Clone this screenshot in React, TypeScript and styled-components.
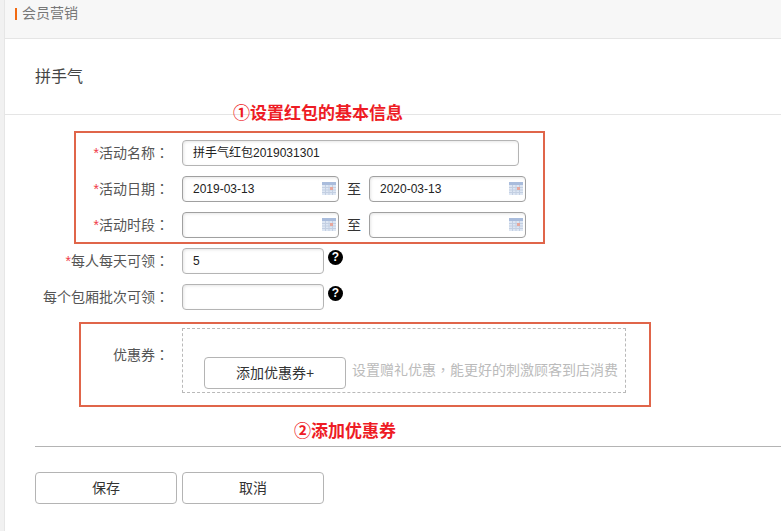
import React from "react";
import styled, { createGlobalStyle } from "styled-components";

const Global = createGlobalStyle`
  html, body { margin: 0; padding: 0; background: #fff; }
  body { font-family: "Liberation Sans", "Noto Sans CJK SC", sans-serif; font-size: 14px; color: #333; }
  * { box-sizing: border-box; }
`;

const Page = styled.div`
  position: relative;
  width: 781px;
  height: 531px;
  overflow: hidden;
  display: flex;
`;
const Strip = styled.div`
  width: 5px;
  flex: none;
  background: #f1f1f1;
  border-right: 1px solid #e6e6e6;
`;
const Main = styled.div`
  flex: 1;
  min-width: 0;
`;
const Crumb = styled.div`
  height: 39px;
  background: #f7f7f7;
  border-bottom: 1px solid #e5e5e5;
  padding: 6px 0 0 10px;
  display: flex;
  align-items: flex-start;
  gap: 5px;
  font-size: 14px;
  line-height: 15px;
  color: #777;
`;
const CrumbMark = styled.span`
  width: 2px;
  height: 12px;
  margin-top: 2px;
  background: #f26a12;
`;
const Heading = styled.div`
  height: 76px;
  border-bottom: 1px solid #e5e5e5;
  padding: 28px 0 0 30px;
  font-size: 16px;
  line-height: 20px;
  color: #444;
`;
const Form = styled.div`
  padding-top: 25px;
  display: flex;
  flex-direction: column;
  gap: 10px;
`;
const Row = styled.div`
  display: flex;
  align-items: flex-start;
`;
const Label = styled.div`
  width: 177px;
  height: 26px;
  flex: none;
  padding-right: 13px;
  text-align: right;
  line-height: 26px;
  color: #555;
  white-space: nowrap;
`;
const Colon = styled.span`
  font-family: "Noto Sans CJK TC", sans-serif;
  line-height: 1;
`;
const Star = styled.span`
  color: #f0394a;
`;
const InputBox = styled.div<{ $w: number }>`
  position: relative;
  width: ${(p) => p.$w}px;
  height: 26px;
  border: 1px solid #b4b4b4;
  border-radius: 4px;
  box-shadow: inset 1px 1px 3px rgba(0, 0, 0, 0.1);
  padding-left: 10px;
  font-size: 12px;
  line-height: 24px;
  color: #222;
  background: #fff;
`;
const DateBox = styled(InputBox)`
  border-color: #a0a0a0;
`;
const CalSlot = styled.span`
  position: absolute;
  right: 2px;
  top: 5px;
  display: flex;
`;
const To = styled.span`
  width: 30px;
  text-align: center;
  line-height: 26px;
  font-size: 14px;
  color: #333;
`;
const Help = styled.span`
  width: 15px;
  height: 15px;
  margin: 2px 0 0 4px;
  border-radius: 50%;
  background: #000;
  color: #fff;
  font-size: 12px;
  font-weight: 700;
  line-height: 15px;
  text-align: center;
`;
const CouponRow = styled(Row)`
  margin-top: 8px;
`;
const CouponLabel = styled(Label)`
  height: 37px;
  line-height: 20px;
  padding-top: 17px;
`;
const CouponBox = styled.div`
  width: 444px;
  height: 65px;
  border: 1px dashed #b9b9b9;
  padding: 28px 0 0 21px;
  display: flex;
  align-items: flex-start;
  gap: 6px;
`;
const Button = styled.div`
  width: 142px;
  height: 32px;
  border: 1px solid #b4b4b4;
  border-radius: 4px;
  background: #fff;
  text-align: center;
  line-height: 30px;
  font-size: 14px;
  color: #333;
`;
const Hint = styled.span`
  font-family: "Noto Sans CJK TC", sans-serif;
  font-size: 14px;
  line-height: 24px;
  color: #bbb;
  white-space: nowrap;
`;
const Rule = styled.div`
  height: 1px;
  margin: 53px 0 0 30px;
  background: #b4b4b4;
`;
const Actions = styled.div`
  display: flex;
  gap: 5px;
  padding: 25px 0 0 30px;
`;
const Callout = styled.div<{ $x: number; $y: number; $w: number; $h: number }>`
  position: absolute;
  left: ${(p) => p.$x}px;
  top: ${(p) => p.$y}px;
  width: ${(p) => p.$w}px;
  height: ${(p) => p.$h}px;
  border: 2px solid #e0654a;
  pointer-events: none;
`;
const Note = styled.div<{ $x: number; $y: number }>`
  position: absolute;
  left: ${(p) => p.$x}px;
  top: ${(p) => p.$y}px;
  font-size: 17px;
  font-weight: 700;
  line-height: 20px;
  color: #ee1c25;
  white-space: nowrap;
`;

const Calendar = () => (
  <svg width="14" height="13" viewBox="0 0 14 13">
    <rect width="14" height="13" fill="#dde6f3" />
    <rect width="14" height="3" fill="#a9bcdc" />
    <path d="M0 5.5h14M0 8h14M0 10.5h14M3.5 3v10M7 3v10M10.500 3v10" stroke="#c3cfe2" strokeWidth="1" fill="none" />
    <rect x="8" y="5" width="3" height="3" fill="#e6a79d" />
  </svg>
);

const DateField = ({ value }: { value?: string }) => (
  <DateBox $w={157}>
    {value}
    <CalSlot>
      <Calendar />
    </CalSlot>
  </DateBox>
);

export default function App() {
  return (
    <Page>
      <Global />
      <Strip />
      <Main>
        <Crumb>
          <CrumbMark />
          会员营销
        </Crumb>
        <Heading>拼手气</Heading>
        <Form>
          <Row>
            <Label><Star>*</Star>活动名称<Colon>：</Colon></Label>
            <InputBox $w={337}>拼手气红包2019031301</InputBox>
          </Row>
          <Row>
            <Label><Star>*</Star>活动日期<Colon>：</Colon></Label>
            <DateField value="2019-03-13" />
            <To>至</To>
            <DateField value="2020-03-13" />
          </Row>
          <Row>
            <Label><Star>*</Star>活动时段<Colon>：</Colon></Label>
            <DateField />
            <To>至</To>
            <DateField />
          </Row>
          <Row>
            <Label><Star>*</Star>每人每天可领<Colon>：</Colon></Label>
            <InputBox $w={142}>5</InputBox>
            <Help>?</Help>
          </Row>
          <Row>
            <Label>每个包厢批次可领<Colon>：</Colon></Label>
            <InputBox $w={142} />
            <Help>?</Help>
          </Row>
          <CouponRow>
            <CouponLabel>优惠券<Colon>：</Colon></CouponLabel>
            <CouponBox>
              <Button>添加优惠券+</Button>
              <Hint>设置赠礼优惠，能更好的刺激顾客到店消费</Hint>
            </CouponBox>
          </CouponRow>
        </Form>
        <Rule />
        <Actions>
          <Button>保存</Button>
          <Button>取消</Button>
        </Actions>
      </Main>
      <Callout $x={74} $y={131} $w={471} $h={113} />
      <Callout $x={79} $y={322} $w={572} $h={85} />
      <Note $x={233} $y={104}>①设置红包的基本信息</Note>
      <Note $x={294} $y={422}>②添加优惠券</Note>
    </Page>
  );
}
